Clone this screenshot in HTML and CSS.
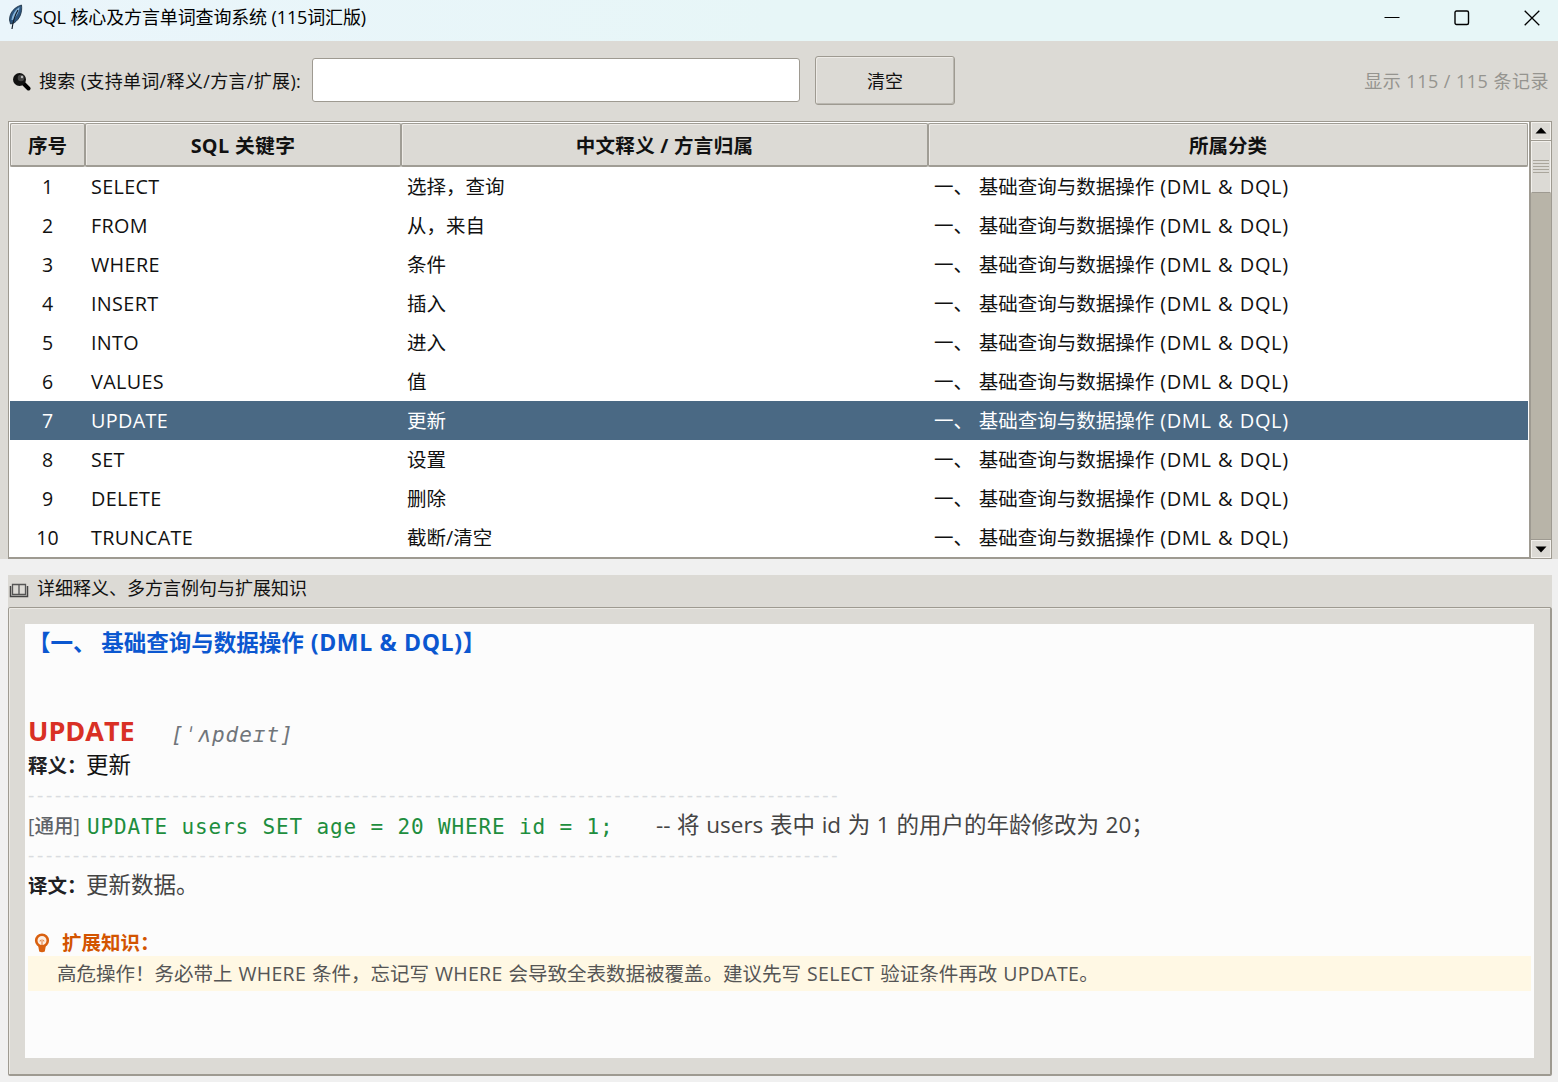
FILE: index.html
```
<!DOCTYPE html>
<html lang="zh-CN">
<head>
  <meta charset="UTF-8">
  <meta name="viewport" content="width=device-width, initial-scale=1.0">
  <title>SQL 核心及方言单词查询系统 (115词汇版)</title>
  <link rel="stylesheet" href="styles.css">
</head>
<body>

  <header class="titlebar">
    <svg class="feather" width="18" height="26" viewBox="0 0 18 26">
      <path d="M14.500 1C8 3 2.500 8 2.500 16L3.500 20L7 19C13 15 15.500 8 14.500 1Z" fill="#2d567f" stroke="#182c40" stroke-width="0.8"/>
      <path d="M12.500 3C8 6 5 11 4.500 16L6 16C10 12 12.500 7 12.500 3Z" fill="#86b3d8"/>
      <path d="M11 6C8 11 6 17 5 25" fill="none" stroke="#16202b" stroke-width="1.2"/>
    </svg>
    <span class="title">SQL 核心及方言单词查询系统 (115词汇版)</span>
    <div class="window-buttons">
      <svg width="16" height="16" viewBox="0 0 16 16"><path d="M0.500 7.500H15.500" stroke="#000"/></svg>
      <svg width="16" height="16" viewBox="0 0 16 16"><rect x="1" y="1" width="13.500" height="13.500" rx="1.500" fill="none" stroke="#000" stroke-width="1.400"/></svg>
      <svg width="16" height="16" viewBox="0 0 16 16"><path d="M0.700 0.700L15.300 15.300M15.300 0.700L0.700 15.300" stroke="#000" stroke-width="1.300"/></svg>
    </div>
  </header>

  <main class="top">
    <div class="toolbar">
      <svg class="glass" width="20" height="20" viewBox="0 0 20 20">
        <path d="M11 12L16.500 17.500" stroke="#000" stroke-width="4" stroke-linecap="round"/>
        <circle cx="7.500" cy="8.500" r="6.500" fill="#111"/>
        <circle cx="9" cy="7" r="3.300" fill="#444"/>
        <circle cx="10" cy="6" r="1.200" fill="#bbb"/>
      </svg>
      <label class="search-label" for="search">搜索 (支持单词/释义/方言/扩展):</label>
      <input class="search" id="search" type="text">
      <button class="clear">清空</button>
      <span class="status">显示 115 / 115 条记录</span>
    </div>

    <div class="list">
      <div class="tree">
        <div class="row head"><div>序号</div><div>SQL 关键字</div><div>中文释义 / 方言归属</div><div>所属分类</div></div>
        <div class="row"><div>1</div><div>SELECT</div><div>选择，查询</div><div>一、 基础查询与数据操作 <span>(DML &amp; DQL)</span></div></div>
        <div class="row"><div>2</div><div>FROM</div><div>从，来自</div><div>一、 基础查询与数据操作 <span>(DML &amp; DQL)</span></div></div>
        <div class="row"><div>3</div><div>WHERE</div><div>条件</div><div>一、 基础查询与数据操作 <span>(DML &amp; DQL)</span></div></div>
        <div class="row"><div>4</div><div>INSERT</div><div>插入</div><div>一、 基础查询与数据操作 <span>(DML &amp; DQL)</span></div></div>
        <div class="row"><div>5</div><div>INTO</div><div>进入</div><div>一、 基础查询与数据操作 <span>(DML &amp; DQL)</span></div></div>
        <div class="row"><div>6</div><div>VALUES</div><div>值</div><div>一、 基础查询与数据操作 <span>(DML &amp; DQL)</span></div></div>
        <div class="row selected"><div>7</div><div>UPDATE</div><div>更新</div><div>一、 基础查询与数据操作 <span>(DML &amp; DQL)</span></div></div>
        <div class="row"><div>8</div><div>SET</div><div>设置</div><div>一、 基础查询与数据操作 <span>(DML &amp; DQL)</span></div></div>
        <div class="row"><div>9</div><div>DELETE</div><div>删除</div><div>一、 基础查询与数据操作 <span>(DML &amp; DQL)</span></div></div>
        <div class="row"><div>10</div><div>TRUNCATE</div><div>截断/清空</div><div>一、 基础查询与数据操作 <span>(DML &amp; DQL)</span></div></div>
      </div>
      <div class="scrollbar">
        <div class="arrow"><svg width="12" height="7" viewBox="0 0 12 7"><path d="M6 0.500L11.500 6.500H0.500Z"/></svg></div>
        <div class="thumb"><i></i><i></i><i></i><i></i><i></i></div>
        <div class="arrow down"><svg width="12" height="7" viewBox="0 0 12 7"><path d="M6 6.500L11.500 0.500H0.500Z"/></svg></div>
      </div>
    </div>
  </main>

  <section class="detail">
    <div class="detail-label">
      <svg width="20" height="16" viewBox="0 0 20 16">
        <path d="M3.500 1.500H16.500V11.500H3.500ZM10 1.500V12" fill="none" stroke="#555" stroke-width="1.300"/>
        <path d="M1.500 3V13.500H18.500V3" fill="none" stroke="#444" stroke-width="1.500"/>
      </svg>
      <span>详细释义、多方言例句与扩展知识</span>
    </div>
    <div class="frame">
      <div class="text">
        <div class="category">【一、 基础查询与数据操作 <span>(DML &amp; DQL)</span>】</div>
        <div class="word"><b>UPDATE</b><i>[ˈʌpdeɪt]</i></div>
        <div class="line meaning"><b>释义：</b><span>更新</span></div>
        <div class="line dashes">------------------------------------------------------------------------------------------</div>
        <div class="line example"><span class="tag">[通用]</span><code>UPDATE users SET age = 20 WHERE id = 1;</code><span class="comment">-- 将 users 表中 id 为 1 的用户的年龄修改为 20；</span></div>
        <div class="line dashes">------------------------------------------------------------------------------------------</div>
        <div class="line translation"><b>译文：</b><span>更新数据。</span></div>
        <div class="tip-title">
          <svg width="16" height="20" viewBox="0 0 16 20">
            <circle cx="8" cy="7.500" r="5.800" fill="#fdeee2" stroke="#d9600f" stroke-width="2.600"/>
            <path d="M6 8.500C6 6.500 10 6.500 10 8.500M8 8V13" fill="none" stroke="#e58b50" stroke-width="1.200"/>
            <path d="M4 12H12L10.800 18.500Q8 20 5.200 18.500Z" fill="#d9600f"/>
          </svg>
          <span>扩展知识：</span>
        </div>
        <div class="tip">高危操作！务必带上 <span>WHERE</span> 条件，忘记写 <span>WHERE</span> 会导致全表数据被覆盖。建议先写 <span>SELECT</span> 验证条件再改 <span>UPDATE</span>。</div>
      </div>
    </div>
  </section>

</body>
</html>
```
FILE: styles.css
```
* {
  box-sizing: border-box;
}
body {
  margin: 0;
  width: 1558px;
  height: 1082px;
  overflow: hidden;
  background-color: #f0f0f0;
  color: #111;
  font-family: "Open Sans", "Noto Sans CJK SC", sans-serif;
  font-size: 19.5px;
  white-space: nowrap;
}
.titlebar {
  display: flex;
  align-items: center;
  height: 41px;
  padding: 0 18px 6px 7px;
  background: linear-gradient(90deg, #eaf5fb, #e7f6f7 50%);
}
.feather {
  margin-top: -2px;
}
.title {
  margin: -3px 0 0 8px;
  font-size: 18px;
  letter-spacing: -0.13px;
  color: #000;
}
.window-buttons {
  display: flex;
  gap: 54px;
  margin-left: auto;
}
.top {
  height: 518px;
  background-color: #dcdad5;
}
.toolbar {
  display: flex;
  align-items: center;
  height: 80px;
  padding: 0 9px 1px 12px;
  font-size: 18px;
}
.search-label {
  width: 273px;
  margin: -1px 0 0 7px;
  letter-spacing: 0.33px;
}
.search {
  width: 488px;
  height: 44px;
  margin-top: -1px;
  border: 1px solid #9e9a91;
  border-radius: 3px;
  background-color: #fff;
  outline: none;
}
.clear {
  width: 140px;
  height: 49px;
  margin-left: 15px;
  padding-bottom: 2px;
  border: 1px solid #9e9a91;
  border-radius: 3px;
  background-color: #dcdad5;
  box-shadow: inset 1px 1px #eeebe7, inset -1px -1px #bab7b0;
  font: inherit;
  color: #111;
}
.status {
  margin: -1px 0 0 auto;
  letter-spacing: 0.48px;
  color: #95948f;
}
.list {
  display: flex;
  height: 438px;
  padding: 0 6px 0 8px;
}
.tree {
  width: 1522px;
  height: 438px;
  padding: 1px 1px 0;
  border: 1px solid #9e9a91;
  border-bottom-width: 2px;
  background-color: #fff;
}
.row {
  display: grid;
  grid-template-columns: 75px 316px 527px 600px;
  height: 39px;
  line-height: 39px;
}
.row div {
  padding-left: 6px;
}
.row div:first-child {
  padding-left: 0;
  text-align: center;
}
.row div:nth-child(2) {
  font-size: 19.8px;
  letter-spacing: 0.35px;
}
.row div:nth-child(4) {
  word-spacing: 0.8px;
}
.row span {
  font-size: 20px;
  letter-spacing: 0.6px;
}
.row.head {
  height: 44px;
  background-color: #dcdad5;
  line-height: 39px;
  font-weight: bold;
}
.row.head div {
  padding: 2px 0 0;
  border: 1px solid #a09d95;
  border-bottom-width: 2px;
  border-radius: 2px;
  box-shadow: inset 1px 1px #eeebe7;
  text-align: center;
}
.row.head div:nth-child(3) {
  letter-spacing: 0.3px;
}
.row.selected {
  background-color: #4a6984;
  color: #fff;
}
.scrollbar {
  display: flex;
  flex-direction: column;
  width: 22px;
  border: 1px solid #9e9a91;
  background-color: #b8b4a8;
}
.arrow {
  display: flex;
  align-items: center;
  justify-content: center;
  height: 18px;
  padding-bottom: 2px;
  border: 1px solid #f3f1ed;
  background-color: #dcdad5;
}
.arrow.down {
  margin-top: auto;
  padding-bottom: 0;
  box-shadow: 0 -1px #9e9a91;
}
.thumb {
  display: flex;
  flex-direction: column;
  align-items: center;
  justify-content: center;
  gap: 2px;
  height: 52px;
  margin-top: 1px;
  padding-bottom: 2px;
  border: 1px solid #f3f1ed;
  border-bottom-color: #9e9a91;
  box-shadow: 0 -1px #9e9a91;
  background-color: #dcdad5;
}
.thumb i {
  width: 16px;
  height: 1px;
  background-color: #aaa69c;
}
.detail {
  margin: 16px 6px 0 8px;
}
.detail-label {
  display: flex;
  align-items: center;
  height: 32px;
  padding: 0 0 5px 1px;
  background-color: #dcdad5;
  font-size: 18px;
}
.detail-label svg {
  margin-top: 4px;
}
.detail-label span {
  margin: -3px 0 0 8px;
}
.frame {
  height: 469px;
  padding: 16px;
  border: 1px solid #9e9a91;
  border-right-width: 2px;
  border-bottom-width: 2px;
  border-radius: 2px;
  background-color: #dcdad5;
  box-shadow: inset 1px 1px #eceae5;
}
.text {
  height: 434px;
  padding-left: 3px;
  background-color: #fcfcfc;
}
.category {
  height: 36px;
  margin-bottom: 57px;
  line-height: 36px;
  font-size: 22.5px;
  font-weight: bold;
  color: #0b57d0;
}
.category span {
  margin-left: 1px;
  font-size: 23px;
  letter-spacing: 0.65px;
}
.word {
  display: flex;
  height: 32px;
  line-height: 30px;
}
.word b {
  width: 143px;
  margin-top: -1px;
  font-size: 27px;
  color: #d93025;
}
.word i {
  padding-top: 3px;
  font-family: "DejaVu Sans Mono", monospace;
  font-size: 21px;
  letter-spacing: 1px;
  color: #70757a;
}
.line {
  display: flex;
  height: 30px;
  line-height: 28px;
  font-size: 22.5px;
  color: #444;
}
.line b {
  width: 58px;
  padding-top: 1px;
  font-size: 19.5px;
  color: #202124;
}
.line.meaning {
  height: 32px;
  line-height: 32px;
  color: #111;
}
.line.dashes {
  font-size: 19.5px;
  letter-spacing: 2.75px;
  color: #dadce0;
}
.tag {
  width: 59px;
  padding-top: 1px;
  font-size: 19.5px;
  font-weight: 500;
  color: #5f6368;
}
.example code {
  width: 569px;
  padding-top: 2px;
  font-family: "DejaVu Sans Mono", monospace;
  font-size: 21px;
  letter-spacing: 0.86px;
  color: #1e8e3e;
}
.comment {
  word-spacing: 0.8px;
}
.tip-title {
  display: flex;
  align-items: center;
  height: 28px;
  margin-top: 27px;
  padding: 1px 0 0 6px;
  line-height: 28px;
  font-weight: bold;
  color: #d35400;
}
.tip-title span {
  margin-left: 12px;
}
.tip {
  height: 35px;
  margin-right: 3px;
  padding-left: 29px;
  background-color: #fff8e4;
  line-height: 35px;
  word-spacing: 0.9px;
  color: #555;
}
.tip span {
  letter-spacing: 0.3px;
}
```
